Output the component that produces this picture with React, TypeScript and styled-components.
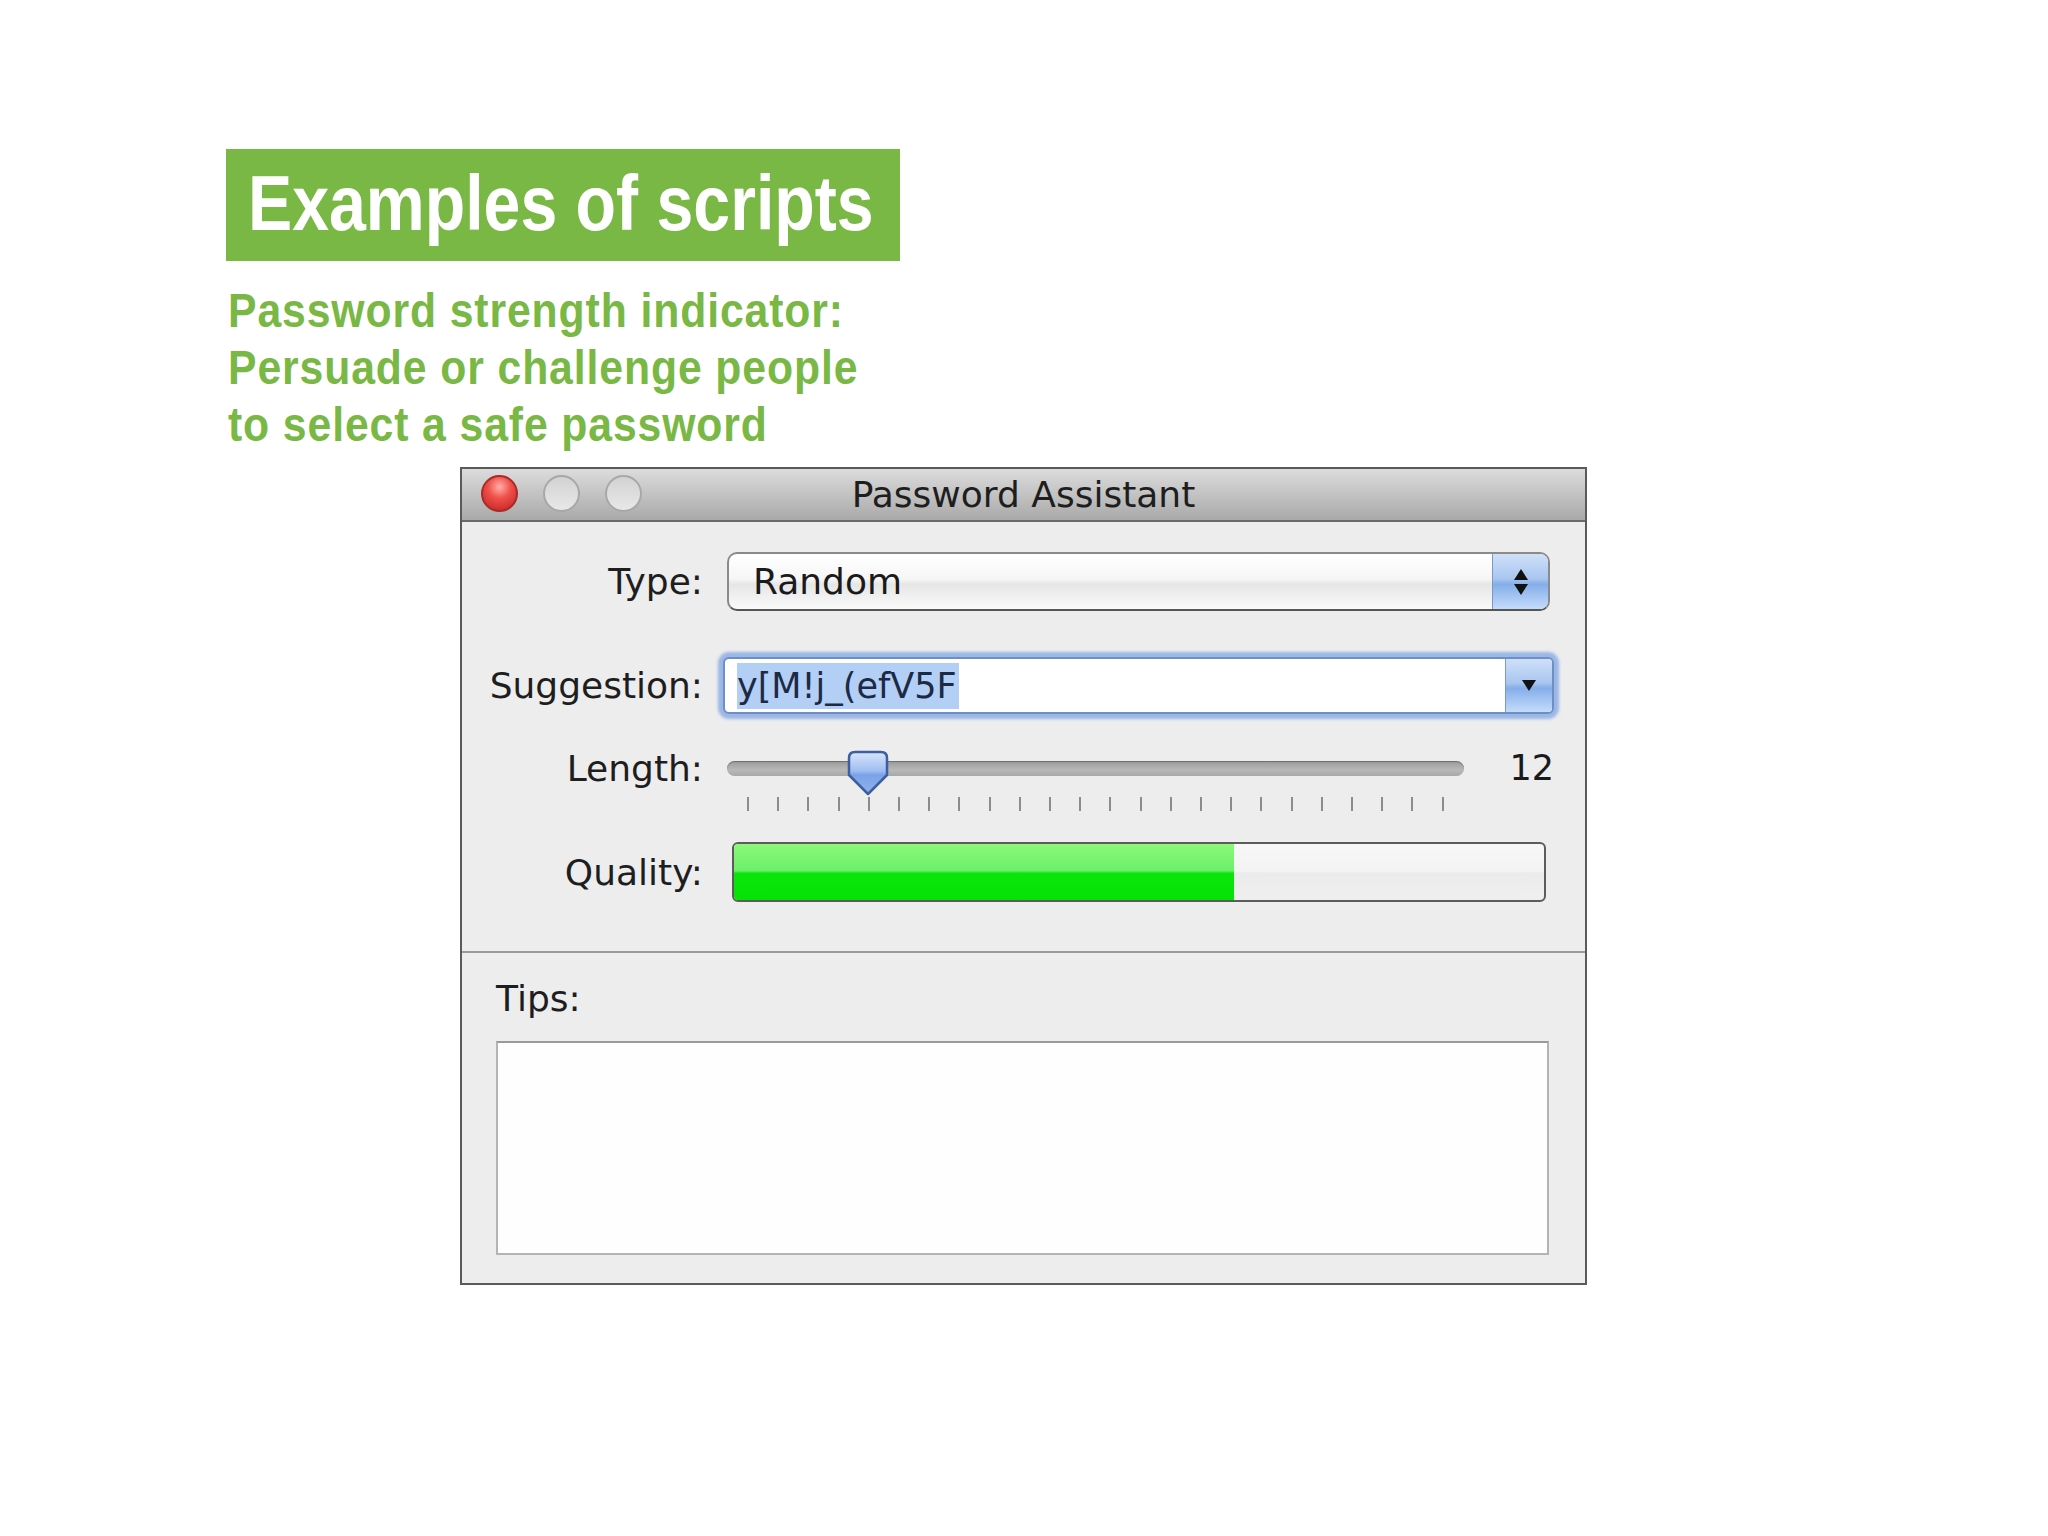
import React from 'react';
import styled, { createGlobalStyle } from 'styled-components';

const GlobalStyle = createGlobalStyle`
  html, body {
    margin: 0;
    padding: 0;
    background: #ffffff;
  }
`;

const uiFont = `"DejaVu Sans", "Liberation Sans", sans-serif`;
const headFont = `"Liberation Sans", Arial, sans-serif`;

const Page = styled.div`
  width: 2048px;
  height: 1536px;
  box-sizing: border-box;
  padding: 149px 0 0 226px;
`;

const Banner = styled.h1`
  display: flex;
  align-items: center;
  box-sizing: border-box;
  width: 674px;
  height: 112px;
  margin: 0;
  padding: 0 0 4px 22px;
  background: #79b844;
  color: #ffffff;
  font-family: ${headFont};
  font-weight: 700;
  font-size: 77px;
  white-space: nowrap;
`;

// No condensed face is installed, so the heading text is narrowed by hand
const Narrow = styled.span<{ $x: number }>`
  display: inline-block;
  transform: scaleX(${(p) => p.$x});
  transform-origin: left center;
`;

const Subtitle = styled.p`
  margin: 21px 0 0 2px;
  color: #79b844;
  font-family: ${headFont};
  font-weight: 700;
  font-size: 48px;
  line-height: 57px;
  letter-spacing: 1px;
  white-space: nowrap;
  transform: scaleX(0.89);
  transform-origin: left top;
`;

const Window = styled.div`
  width: 1127px;
  margin: 14px 0 0 234px;
  box-sizing: border-box;
  border: 2px solid #5a5a5a;
  background: #ededee;
  font-family: ${uiFont};
  color: #1a1a1a;
`;

const TitleBar = styled.div`
  position: relative;
  height: 51px;
  display: flex;
  align-items: center;
  justify-content: center;
  background: linear-gradient(#dcdcdc, #a9a9a9);
  border-bottom: 2px solid #6a6a6a;
  font-size: 36px;
  color: #1e1e1e;
`;

const Lights = styled.div`
  position: absolute;
  left: 19px;
  top: 6px;
  display: flex;
  gap: 25px;
`;

const Light = styled.span<{ $red?: boolean }>`
  width: 37px;
  height: 37px;
  border-radius: 50%;
  box-sizing: border-box;
  border: 2px solid ${(p) => (p.$red ? '#a82a2a' : '#a8a8a8')};
  background: ${(p) =>
    p.$red
      ? 'radial-gradient(circle at 50% 30%, #ffb0a8 0%, #f0504a 40%, #c0201c 100%)'
      : 'linear-gradient(#d2d2d2, #e8e8e8)'};
`;

const Form = styled.div`
  display: grid;
  grid-template-columns: 241px 1fr;
  column-gap: 24px;
  padding: 30px 35px 49px 0;
  border-bottom: 2px solid #9a9a9a;
`;

const Label = styled.div<{ $top?: number; $h: number }>`
  margin-top: ${(p) => p.$top ?? 0}px;
  height: ${(p) => p.$h}px;
  display: flex;
  align-items: center;
  justify-content: flex-end;
  font-size: 36px;
  color: #1e1e1e;
`;

const Cell = styled.div<{ $top?: number }>`
  margin-top: ${(p) => p.$top ?? 0}px;
`;

const Popup = styled.div`
  height: 59px;
  box-sizing: border-box;
  display: flex;
  border: 2px solid #8a8a8a;
  border-bottom-color: #555;
  border-radius: 10px;
  overflow: hidden;
  background: linear-gradient(#ffffff 0%, #f6f6f6 45%, #e6e6e6 55%, #fafafa 100%);
`;

const PopupText = styled.div`
  flex: 1;
  display: flex;
  align-items: center;
  padding-left: 24px;
  font-size: 36px;
  color: #1a1a1a;
`;

const BlueButton = styled.div<{ $w: number }>`
  width: ${(p) => p.$w}px;
  display: flex;
  flex-direction: column;
  align-items: center;
  justify-content: center;
  gap: 4px;
  border-left: 1px solid #7d98c4;
  background: linear-gradient(#cfe0f8 0%, #a9c6f0 45%, #84aee9 55%, #c4dcfb 100%);
`;

const Combo = styled.div`
  height: 57px;
  margin: 0 -4px;
  box-sizing: border-box;
  display: flex;
  border: 2px solid #6d8fc6;
  border-radius: 6px;
  overflow: hidden;
  background: #ffffff;
  box-shadow: 0 0 3px 5px rgba(120, 160, 225, 0.7);
`;

const ComboText = styled.div`
  flex: 1;
  display: flex;
  align-items: center;
  padding-left: 12px;
`;

const Selection = styled.span`
  background: #b4cff5;
  font-size: 35px;
  line-height: 46px;
  color: #1c2a44;
  padding-right: 2px;
`;

const SliderRow = styled.div`
  display: flex;
  align-items: flex-start;
`;

const SliderTrackArea = styled.div`
  flex: 1;
  display: flex;
  flex-direction: column;
`;

const TrackBox = styled.div`
  position: relative;
  height: 44px;
  display: flex;
  align-items: center;
`;

const Track = styled.div`
  flex: 1;
  height: 15px;
  border-radius: 8px;
  background: linear-gradient(#9a9a9a, #b8b8b8 60%, #a8a8a8);
  box-shadow: inset 0 1px 1px rgba(0, 0, 0, 0.3);
`;

const Thumb = styled.svg`
  position: absolute;
  top: 4px;
`;

const Ticks = styled.div`
  display: flex;
  justify-content: space-between;
  padding: 0 20px;
  margin-top: 7px;
`;

const Tick = styled.span`
  width: 2px;
  height: 14px;
  background: #8c8c8c;
`;

const SliderValue = styled.div`
  width: 90px;
  height: 44px;
  margin-right: -4px;
  display: flex;
  align-items: center;
  justify-content: flex-end;
  font-size: 35px;
  color: #1a1a1a;
`;

const Meter = styled.div`
  height: 60px;
  margin: 0 4px 0 5px;
  box-sizing: border-box;
  border: 2px solid #5c5c5c;
  border-radius: 6px;
  overflow: hidden;
  background: linear-gradient(#f7f7f7 0%, #f3f3f3 48%, #ebebeb 52%, #efefef 100%);
`;

const MeterFill = styled.div`
  height: 100%;
  background: linear-gradient(
    #8cf87a 0%,
    #6af06a 48%,
    #0ae60a 52%,
    #06e206 100%
  );
`;

const TipsSection = styled.div`
  padding: 28px 36px 28px 34px;
`;

const TipsLabel = styled.div`
  font-size: 36px;
  line-height: 36px;
  color: #1e1e1e;
`;

const TipsBox = styled.div`
  height: 214px;
  margin-top: 24px;
  box-sizing: border-box;
  border: 2px solid #b4b4b4;
  border-top-color: #9a9a9a;
  background: #fefefe;
`;

const Arrow = ({ dir }: { dir: 'up' | 'down' }) => (
  <svg width="14" height="11" viewBox="0 0 14 11">
    <path d={dir === 'up' ? 'M7 0 L14 11 L0 11 Z' : 'M0 0 L14 0 L7 11 Z'} fill="#111" />
  </svg>
);

const TICKS = 24;
const MIN = 8;
const length = 12;
const quality = 0.617;

export default function App() {
  const thumbPct = (length - MIN) / (TICKS - 1);
  return (
    <Page>
      <GlobalStyle />
      <Banner>
        <Narrow $x={0.86}>Examples of scripts</Narrow>
      </Banner>
      <Subtitle>
        Password strength indicator:
        <br />
        Persuade or challenge people
        <br />
        to select a safe password
      </Subtitle>
      <Window>
        <TitleBar>
          <Lights>
            <Light $red />
            <Light />
            <Light />
          </Lights>
          Password Assistant
        </TitleBar>
        <Form>
          <Label $h={59}>Type:</Label>
          <Cell>
            <Popup>
              <PopupText>Random</PopupText>
              <BlueButton $w={55}>
                <Arrow dir="up" />
                <Arrow dir="down" />
              </BlueButton>
            </Popup>
          </Cell>

          <Label $top={46} $h={57}>Suggestion:</Label>
          <Cell $top={46}>
            <Combo>
              <ComboText>
                <Selection>y[M!j_(efV5F</Selection>
              </ComboText>
              <BlueButton $w={46}>
                <Arrow dir="down" />
              </BlueButton>
            </Combo>
          </Cell>

          <Label $top={32} $h={44}>Length:</Label>
          <Cell $top={32}>
            <SliderRow>
              <SliderTrackArea>
                <TrackBox>
                  <Track />
                  <Thumb
                    width="42"
                    height="46"
                    viewBox="0 0 42 46"
                    style={{ left: `calc(20px + (100% - 40px) * ${thumbPct} - 21px)` }}
                  >
                    <defs>
                      <linearGradient id="thumbFill" x1="0" y1="0" x2="0" y2="1">
                        <stop offset="0" stopColor="#d9e6fb" />
                        <stop offset="0.45" stopColor="#9fbdf0" />
                        <stop offset="0.55" stopColor="#7aa2e6" />
                        <stop offset="1" stopColor="#8fb3ee" />
                      </linearGradient>
                    </defs>
                    <path
                      d="M8 2 H34 Q40 2 40 8 V25 L21 44 L2 25 V8 Q2 2 8 2 Z"
                      fill="url(#thumbFill)"
                      stroke="#3d5f9f"
                      strokeWidth="2.5"
                      strokeLinejoin="round"
                    />
                  </Thumb>
                </TrackBox>
                <Ticks>
                  {Array.from({ length: TICKS }, (_, i) => (
                    <Tick key={i} />
                  ))}
                </Ticks>
              </SliderTrackArea>
              <SliderValue>{length}</SliderValue>
            </SliderRow>
          </Cell>

          <Label $top={31} $h={60}>Quality:</Label>
          <Cell $top={31}>
            <Meter>
              <MeterFill style={{ width: `${quality * 100}%` }} />
            </Meter>
          </Cell>
        </Form>
        <TipsSection>
          <TipsLabel>Tips:</TipsLabel>
          <TipsBox />
        </TipsSection>
      </Window>
    </Page>
  );
}
